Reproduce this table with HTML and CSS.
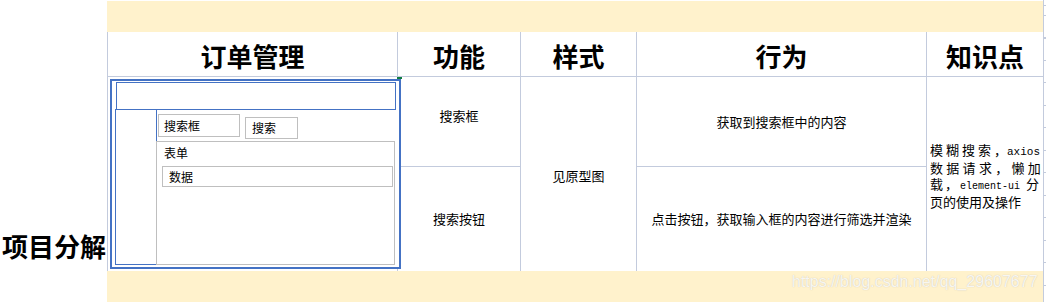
FILE: index.html
```html
<!DOCTYPE html>
<html lang="zh-CN">
<head>
<meta charset="utf-8">
<title>项目分解</title>
<link rel="stylesheet" href="styles.css">
</head>
<body>
<div class="sheet">
  <div class="band band-top"></div>
  <div class="hd hd-order">订单管理</div>
  <div class="hd hd-feat">功能</div>
  <div class="hd hd-style">样式</div>
  <div class="hd hd-act">行为</div>
  <div class="hd hd-know">知识点</div>

  <div class="label">项目分解</div>

  <div class="proto-cell">
    <div class="handle"></div>
    <div class="proto">
      <div class="proto-head"></div>
      <div class="proto-body">
        <div class="proto-side"></div>
        <div class="proto-main">
          <div class="proto-search">
            <div class="proto-input">搜索框</div>
            <div class="proto-btn">搜索</div>
          </div>
          <div class="proto-form">
            <div class="proto-form-title">表单</div>
            <div class="proto-data">数据</div>
          </div>
        </div>
      </div>
    </div>
  </div>

  <div class="cell feat-1">搜索框</div>
  <div class="cell feat-2">搜索按钮</div>
  <div class="cell style">见原型图</div>
  <div class="cell act-1">获取到搜索框中的内容</div>
  <div class="cell act-2">点击按钮，获取输入框的内容进行筛选并渲染</div>
  <div class="cell know">
    <div class="know-text">
      <div class="ln ln-1">模糊搜索，<span class="mono mono-a">axios</span></div>
      <div class="ln ln-2">数据请求，懒加</div>
      <div class="ln ln-3">载，<span class="mono mono-b">element-ui</span>分</div>
      <div class="ln">页的使用及操作</div>
    </div>
  </div>

  <div class="band band-bottom"></div>
  <div class="ticks"></div>

  <div class="watermark">https://blog.csdn.net/qq_29607677</div>
</div>
</body>
</html>
```

FILE: styles.css
```css
:root {
  --grid: #c3cbdd;
  --blue: #4472c4;
  --gray: #bfbfbf;
  --yellow: #fff2cc;
}

html, body {
  margin: 0;
  padding: 0;
  background: #fff;
}

body {
  font-family: "Noto Sans CJK SC", sans-serif;
  color: #000;
}

.sheet {
  position: relative;
  display: grid;
  grid-template-columns: 107px 291px 123px 116px 290px 116px 3px;
  grid-template-rows: 1px 31px 45px 90px 104px 31px;
  width: 1046px;
  height: 302px;
  overflow: hidden;
}

.band {
  background: var(--yellow);
}

.band-top {
  grid-column: 2 / 7;
  grid-row: 2;
}

.band-bottom {
  grid-column: 2 / 7;
  grid-row: 6;
}

.ticks {
  grid-column: 7;
  grid-row: 1 / 7;
  border-left: 1px solid var(--grid);
  background-image: repeating-linear-gradient(to bottom, var(--grid) 0 1px, transparent 1px 22.5px);
  background-position: 0 15px;
}

/* header row */
.hd {
  grid-row: 3;
  display: flex;
  align-items: center;
  justify-content: center;
  padding-top: 3px;
  border-bottom: 1px solid var(--grid);
  border-right: 1px solid var(--grid);
  font-family: "Noto Sans CJK SC", serif;
  font-size: 26px;
  font-weight: 700;
  line-height: 30px;
}

.hd-order { grid-column: 2; border-left: 1px solid var(--grid); }
.hd-feat { grid-column: 3; }
.hd-style { grid-column: 4; }
.hd-act { grid-column: 5; }
.hd-know { grid-column: 6; border-right: 0; }

/* left label */
.label {
  grid-column: 1;
  grid-row: 5;
  display: flex;
  align-items: flex-end;
  padding: 0 0 12px 2px;
  font-size: 26px;
  font-weight: 700;
  line-height: 26px;
  white-space: nowrap;
}

/* body cells */
.cell {
  display: flex;
  align-items: center;
  justify-content: center;
  font-size: 13px;
  line-height: 16px;
  white-space: nowrap;
}

.feat-1 {
  grid-column: 3;
  grid-row: 4;
  padding-bottom: 12px;
  border-right: 1px solid var(--grid);
  border-bottom: 1px solid var(--grid);
}

.feat-2 {
  grid-column: 3;
  grid-row: 5;
  border-right: 1px solid var(--grid);
}

.style {
  grid-column: 4;
  grid-row: 4 / 6;
  padding-top: 3px;
  border-right: 1px solid var(--grid);
}

.act-1 {
  grid-column: 5;
  grid-row: 4;
  border-right: 1px solid var(--grid);
  border-bottom: 1px solid var(--grid);
}

.act-2 {
  grid-column: 5;
  grid-row: 5;
  border-right: 1px solid var(--grid);
}

.know {
  grid-column: 6;
  grid-row: 4 / 6;
  justify-content: flex-start;
  padding: 3px 0 0 3px;
}

.know-text {
  width: 112px;
  font-size: 13px;
  line-height: 15.3px;
}

.ln {
  white-space: nowrap;
}

.ln-1 { letter-spacing: 3px; }
.ln-2 { letter-spacing: 3.3px; }
.ln-3 { letter-spacing: 2px; }

.mono {
  font-family: "Liberation Mono", monospace;
  letter-spacing: 0;
}

.mono-a {
  font-size: 11px;
  margin-left: -3px;
}

.mono-b {
  font-size: 10px;
  margin-right: 6px;
}

/* prototype drawing */
.proto-cell {
  grid-column: 2;
  grid-row: 4 / 6;
  position: relative;
  border-left: 1px solid var(--grid);
  border-right: 1px solid var(--grid);
}

.handle {
  position: absolute;
  left: 289px;
  top: 0;
  width: 5px;
  height: 2px;
  background: #107c41;
  z-index: 2;
}

.proto {
  position: relative;
  z-index: 1;
  box-sizing: border-box;
  width: 291px;
  height: 190px;
  margin: 2px 0 0 2px;
  border: 2px solid var(--blue);
  background: #fff;
  font-size: 12px;
}

.proto-head {
  box-sizing: border-box;
  width: 280px;
  height: 28px;
  margin: 1px 0 0 4px;
  border: 1px solid var(--blue);
}

.proto-body {
  display: flex;
  height: 156px;
  margin: -1px 0 0 3px;
}

.proto-side {
  box-sizing: border-box;
  width: 42px;
  border: 1px solid var(--blue);
}

.proto-main {
  display: flex;
  flex-direction: column;
}

.proto-search {
  display: flex;
  align-items: flex-start;
  margin: 5px 0 0 1px;
}

.proto-input {
  box-sizing: border-box;
  width: 82px;
  height: 23px;
  padding-left: 5px;
  border: 1px solid var(--gray);
  line-height: 21px;
}

.proto-btn {
  box-sizing: border-box;
  width: 53px;
  height: 22px;
  margin: 3px 0 0 5px;
  padding-left: 6px;
  border: 1px solid var(--gray);
  line-height: 20px;
}

.proto-form {
  box-sizing: border-box;
  width: 239px;
  height: 124px;
  margin: 2px 0 0 -1px;
  border: 1px solid var(--gray);
}

.proto-form-title {
  padding: 3px 0 0 7px;
  line-height: 16px;
}

.proto-data {
  box-sizing: border-box;
  height: 21px;
  margin: 5px 1px 0 5px;
  padding-left: 6px;
  border: 1px solid var(--gray);
  line-height: 19px;
}

.watermark {
  position: absolute;
  left: 792px;
  top: 273px;
  font-family: "Liberation Sans", Arial, sans-serif;
  font-size: 16px;
  line-height: 18px;
  color: rgba(255, 255, 255, 0.85);
  text-shadow: 0 0 1px rgba(130, 130, 130, 0.45);
  white-space: nowrap;
}
```
